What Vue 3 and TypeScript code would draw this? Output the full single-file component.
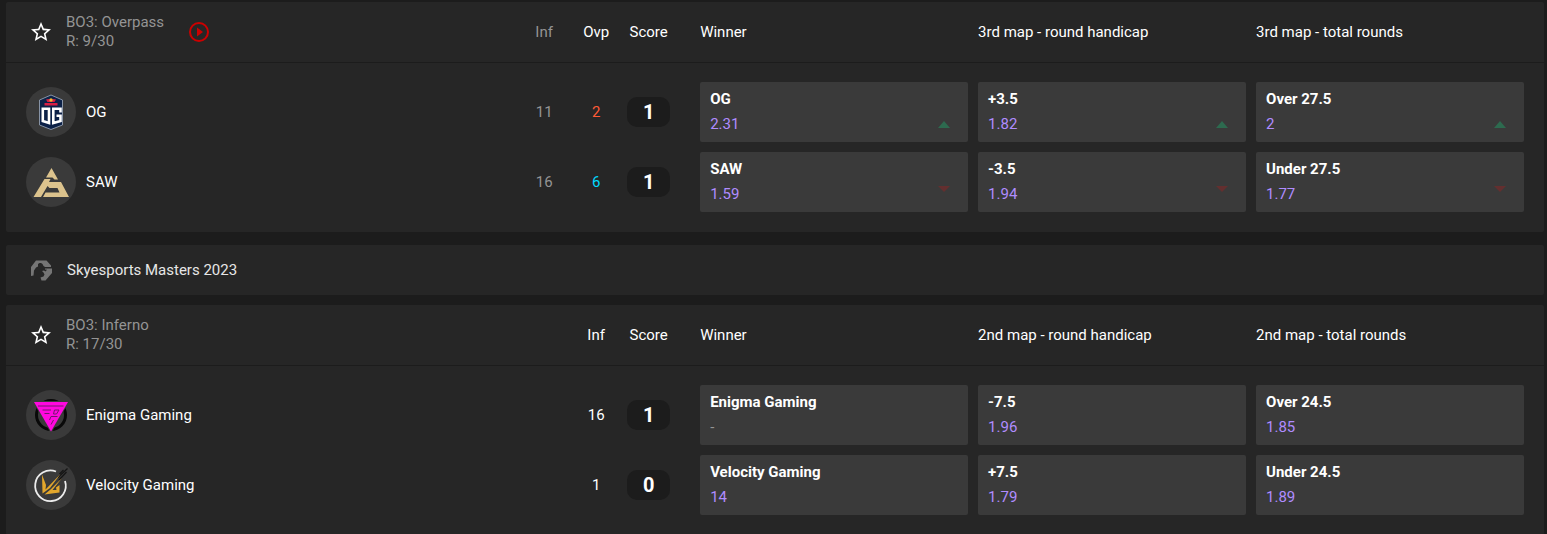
<script setup lang="ts">
type Trend = 'up' | 'down' | null
type Logo = 'og' | 'saw' | 'enigma' | 'velocity'

interface Odd {
  label: string
  value: string
  trend: Trend
}

interface Team {
  name: string
  logo: Logo
  rounds: { value: number; tone: string }[]
  score: number
  odds: Odd[]
}

interface Match {
  id: number
  format: string
  round: string
  stream: boolean
  maps: { name: string; finished: boolean }[]
  markets: string[]
  teams: Team[]
}

const overpass: Match = {
  id: 1,
  format: 'BO3: Overpass',
  round: 'R: 9/30',
  stream: true,
  maps: [
    { name: 'Inf', finished: true },
    { name: 'Ovp', finished: false },
  ],
  markets: ['Winner', '3rd map - round handicap', '3rd map - total rounds'],
  teams: [
    {
      name: 'OG',
      logo: 'og',
      rounds: [
        { value: 11, tone: 'past' },
        { value: 2, tone: 'terror' },
      ],
      score: 1,
      odds: [
        { label: 'OG', value: '2.31', trend: 'up' },
        { label: '+3.5', value: '1.82', trend: 'up' },
        { label: 'Over 27.5', value: '2', trend: 'up' },
      ],
    },
    {
      name: 'SAW',
      logo: 'saw',
      rounds: [
        { value: 16, tone: 'past' },
        { value: 6, tone: 'counter' },
      ],
      score: 1,
      odds: [
        { label: 'SAW', value: '1.59', trend: 'down' },
        { label: '-3.5', value: '1.94', trend: 'down' },
        { label: 'Under 27.5', value: '1.77', trend: 'down' },
      ],
    },
  ],
}

const inferno: Match = {
  id: 2,
  format: 'BO3: Inferno',
  round: 'R: 17/30',
  stream: false,
  maps: [{ name: 'Inf', finished: false }],
  markets: ['Winner', '2nd map - round handicap', '2nd map - total rounds'],
  teams: [
    {
      name: 'Enigma Gaming',
      logo: 'enigma',
      rounds: [{ value: 16, tone: 'live' }],
      score: 1,
      odds: [
        { label: 'Enigma Gaming', value: '-', trend: null },
        { label: '-7.5', value: '1.96', trend: null },
        { label: 'Over 24.5', value: '1.85', trend: null },
      ],
    },
    {
      name: 'Velocity Gaming',
      logo: 'velocity',
      rounds: [{ value: 1, tone: 'live' }],
      score: 0,
      odds: [
        { label: 'Velocity Gaming', value: '14', trend: null },
        { label: '+7.5', value: '1.79', trend: null },
        { label: 'Under 24.5', value: '1.89', trend: null },
      ],
    },
  ],
}

const sections: { tournament: string | null; match: Match }[] = [
  { tournament: null, match: overpass },
  { tournament: 'Skyesports Masters 2023', match: inferno },
]
</script>

<template>
  <main class="page">
    <section v-for="{ tournament, match } in sections" :key="match.id" class="section">
      <header v-if="tournament" class="tournament">
        <svg class="game" viewBox="0 0 21 21" aria-hidden="true">
          <path
            d="M0 7 5 .5H15.500L20 5.500V7H14L12.500 6 11.500 4 10 3H8.500L7 4V6.500L5 7.500 3 10.500 2.500 15.500 0 16ZM14 8.500H21V13L14.500 20.500H10.500L9.500 17.500 12.500 16.500 13.500 14.500 12.500 12.500 11 11 13 10.500 14.500 11.500 16 9.800 14 9.500Z"
          />
        </svg>
        <h2 class="title">{{ tournament }}</h2>
      </header>

      <table class="match" :style="{ '--maps': match.maps.length }">
        <thead class="head">
          <tr class="line">
            <th class="info" scope="col">
              <button class="icon" type="button" aria-label="Add to favourites">
                <svg class="star" viewBox="0 0 24 24" aria-hidden="true">
                  <path
                    d="M22 9.240l-7.190-.62L12 2 9.190 8.630 2 9.240l5.460 4.730L5.820 21 12 17.270 18.180 21l-1.630-7.030L22 9.240zM12 15.400l-3.760 2.270 1-4.280-3.320-2.880 4.380-.38L12 6.100l1.710 4.040 4.380.38-3.320 2.880 1 4.280L12 15.400z"
                  />
                </svg>
              </button>
              <span class="meta">
                <span>{{ match.format }}</span>
                <span>{{ match.round }}</span>
              </span>
              <button v-if="match.stream" class="icon" type="button" aria-label="Watch stream">
                <svg class="play" viewBox="0 0 20 20" aria-hidden="true">
                  <circle cx="10" cy="10" r="9" />
                  <path d="M8 5.500v9l6-4.500z" />
                </svg>
              </button>
            </th>
            <th
              v-for="map in match.maps"
              :key="map.name"
              class="map"
              :class="{ past: map.finished }"
              scope="col"
            >
              {{ map.name }}
            </th>
            <th class="score" scope="col">Score</th>
            <th v-for="market in match.markets" :key="market" class="market" scope="col">
              {{ market }}
            </th>
          </tr>
        </thead>
        <tbody class="body">
          <tr v-for="team in match.teams" :key="team.name" class="line">
            <th class="team" scope="row">
              <span class="avatar">
                <svg v-if="team.logo === 'og'" viewBox="0 0 50 50" aria-hidden="true">
                  <path
                    d="M25 8 36.500 13V38L25 42.500 13.500 38V13Z"
                    fill="#0c2148"
                    stroke="#8793a5"
                    stroke-width="1"
                  />
                  <path d="M20 12.500 23 12l2 1.500L27 12l3 .5L28.500 15H21.500Z" fill="#d81f45" />
                  <circle cx="25" cy="13" r="1.700" fill="#f5b92f" />
                  <path d="M18.500 16h13v2.500h-13z" fill="#d81f45" />
                  <g fill="none" stroke="#fff" stroke-width="2.600">
                    <path d="M16.800 21.800H23V36L16.800 34Z" />
                    <path d="M34.500 25.500V21.800H27.300V36L34.500 34V28.800H30.500" />
                  </g>
                </svg>
                <svg v-else-if="team.logo === 'saw'" viewBox="0 0 50 50" aria-hidden="true">
                  <g fill="#dcc38d">
                    <path d="M25.500 11 32 22.500H28.500L26.500 20.500H20Z" />
                    <path
                      d="M18.500 22H24.500L23 25H35L43 40H17L19.500 35.500H33.500L31.500 31H23.500L21.500 29 15 40H7.500Z"
                    />
                  </g>
                </svg>
                <svg v-else-if="team.logo === 'enigma'" viewBox="0 0 50 50" aria-hidden="true">
                  <circle cx="25" cy="25" r="14.500" fill="none" stroke="#090909" stroke-width="3" />
                  <path d="M6.500 11H43.500L25 43.500Z" fill="#3a3a3a" />
                  <path d="M8 12H42L25 41.500Z" fill="#ff08df" />
                  <path
                    d="M12 16H37.500M16.500 20H25M18.500 23.500H23.500M28.500 20H33L30.500 24H27.500ZM31.500 26.500H25L23.500 30M27.500 30 25 34.500"
                    fill="none"
                    stroke="#70186a"
                    stroke-width="1"
                  />
                </svg>
                <svg v-else viewBox="0 0 50 50" aria-hidden="true">
                  <path
                    d="M30 11.500A15.300 15.300 0 1 0 39 21"
                    fill="none"
                    stroke="#ececec"
                    stroke-width="1.800"
                  />
                  <path
                    d="M41.500 8.500 32 17.500M40.500 12 33 20M37.500 10 33.500 14"
                    fill="none"
                    stroke="#151515"
                    stroke-width="1.300"
                  />
                  <g fill="#e3a72c">
                    <path d="M16 14.500 20 25 19.500 29.500 34.500 14 24 28 16.500 33.500Z" />
                    <path d="M36 18 26.500 30H30.500L30 27.500 33.500 25V32.500L18.500 34.500 24.500 29.500Z" />
                  </g>
                </svg>
              </span>
              <span>{{ team.name }}</span>
            </th>
            <td v-for="(round, i) in team.rounds" :key="i" class="map" :class="round.tone">
              {{ round.value }}
            </td>
            <td class="score">
              <span class="badge">{{ team.score }}</span>
            </td>
            <td v-for="odd in team.odds" :key="odd.label" class="market">
              <button class="odd" type="button">
                <span class="bet">
                  <strong>{{ odd.label }}</strong>
                  <span class="value" :class="{ closed: odd.value === '-' }">{{ odd.value }}</span>
                </span>
                <svg
                  v-if="odd.trend"
                  class="trend"
                  :class="odd.trend"
                  viewBox="0 0 12 12"
                  aria-hidden="true"
                >
                  <path v-if="odd.trend === 'up'" d="M0 12 6 5l6 7z" />
                  <path v-else d="M0 0h12L6 6z" />
                </svg>
              </button>
            </td>
          </tr>
        </tbody>
      </table>
    </section>
  </main>
</template>

<style>
html,
body {
  background: #1c1c1c;
}

body {
  overflow: hidden;
}
</style>

<style scoped>
.page {
  display: flex;
  flex-direction: column;
  gap: 13px;
  padding: 2px 3px 0 6px;
  color: #fff;
  font: 400 15px/19px Roboto, sans-serif;
}

.section {
  display: flex;
  flex-direction: column;
  gap: 10px;
}

.tournament {
  display: flex;
  align-items: center;
  gap: 15px;
  height: 50px;
  padding: 0 25px;
  border-radius: 2px;
  background: #262626;
}

.game {
  width: 21px;
  height: 21px;
  fill: #757575;
}

.title {
  margin: 0;
  color: #e6e6e6;
  font: inherit;
}

.match {
  display: block;
  border-radius: 2px;
  background: #262626;
}

.head {
  display: block;
  padding: 0 20px;
  border-bottom: 1px solid #1c1c1c;
}

.body {
  display: flex;
  flex-direction: column;
  gap: 10px;
  padding: 19px 20px 20px;
}

.line {
  display: grid;
  grid-template-columns:
    minmax(0, 1fr) repeat(var(--maps), 42px) 63px
    repeat(3, calc((55% - 20px) / 3));
  column-gap: 10px;
  align-items: center;
  height: 60px;
}

th,
td {
  padding: 0;
  font-weight: 400;
  text-align: left;
}

.info {
  display: flex;
  align-items: center;
  padding-left: 3px;
}

.meta {
  display: flex;
  flex-direction: column;
  margin: 0 25px 0 13px;
  color: #949494;
}

.icon {
  display: flex;
  padding: 0;
  border: 0;
  background: none;
  cursor: pointer;
}

.star {
  width: 24px;
  height: 24px;
  fill: #fff;
}

.play {
  width: 20px;
  height: 20px;
  fill: #cc0000;
}

.play circle {
  fill: none;
  stroke: #cc0000;
  stroke-width: 2;
}

.team {
  display: flex;
  align-items: center;
  gap: 10px;
}

.avatar {
  width: 50px;
  height: 50px;
  border-radius: 50%;
  background: #3a3a3a;
}

.avatar svg {
  display: block;
}

.line > .map,
.line > .score {
  text-align: center;
}

.past {
  color: #949494;
}

.terror {
  color: #ff5a36;
}

.counter {
  color: #00d8ff;
}

.score {
  padding-right: 20px;
}

.badge {
  display: block;
  border-radius: 10px;
  background: #1c1c1c;
  font-size: 20px;
  font-weight: 700;
  line-height: 30px;
}

.odd {
  display: flex;
  justify-content: space-between;
  width: 100%;
  height: 60px;
  padding: 5px 18px 5px 10px;
  border: 0;
  border-radius: 2px;
  background: #3a3a3a;
  color: inherit;
  font: inherit;
  line-height: 25px;
  text-align: left;
  cursor: pointer;
}

.bet {
  display: flex;
  flex-direction: column;
}

.value {
  color: #b08cff;
}

.closed {
  color: #949494;
}

.trend {
  align-self: flex-end;
  width: 12px;
  height: 12px;
  margin-bottom: 9px;
}

.up {
  fill: #2d6a4f;
}

.down {
  fill: #632f2f;
}
</style>
